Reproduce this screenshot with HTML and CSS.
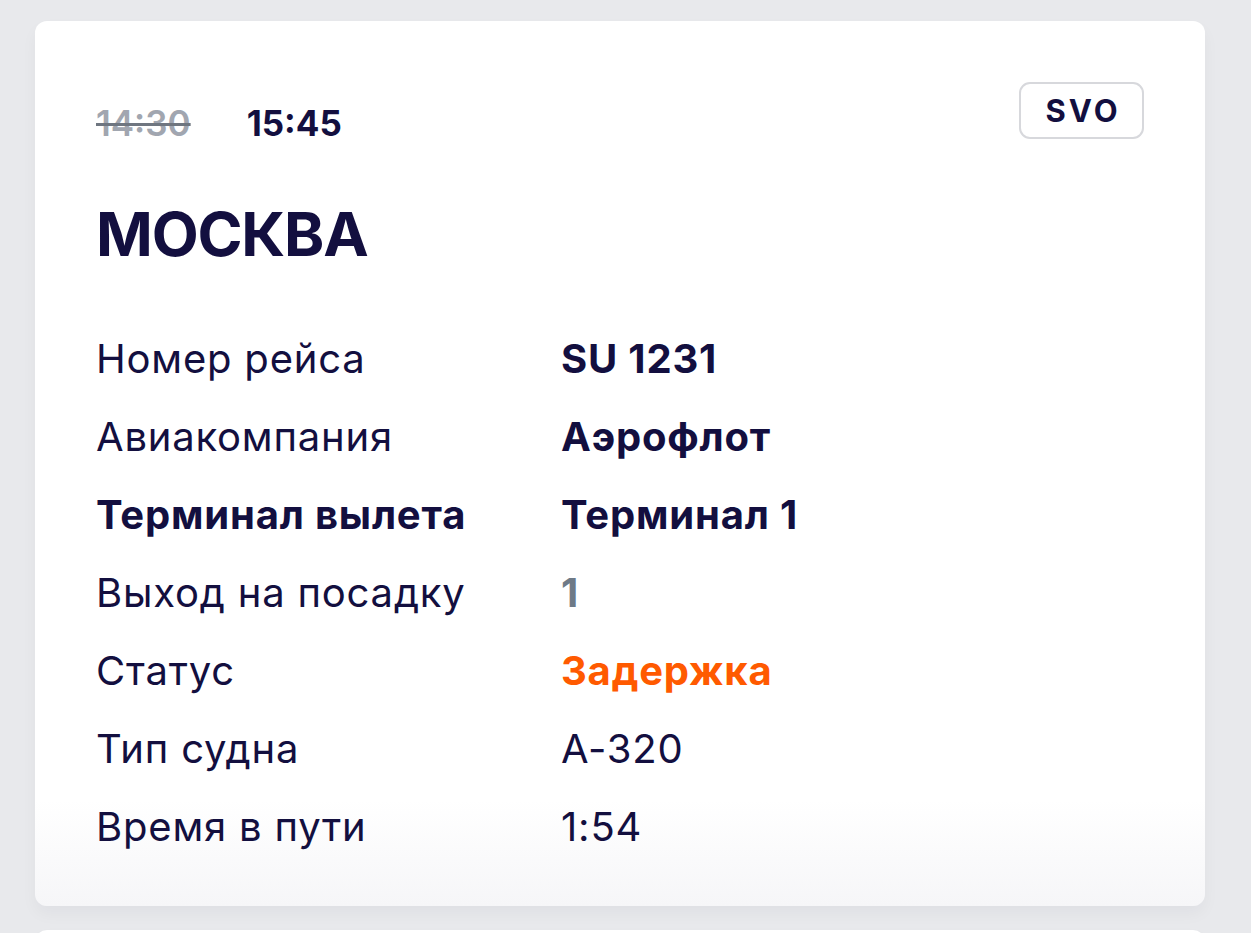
FILE: index.html
```html
<!DOCTYPE html>
<html lang="ru">
<head>
<meta charset="utf-8">
<link rel="stylesheet" href="styles.css">
</head>
<body>
<div class="page">
  <section class="card">
    <div class="head">
      <div class="times">
        <span class="time-old">14:30</span>
        <span class="time-new">15:45</span>
      </div>
      <div class="badge">SVO</div>
    </div>
    <h1 class="city">МОСКВА</h1>
    <dl class="info">
      <dt>Номер рейса</dt><dd class="bold">SU 1231</dd>
      <dt>Авиакомпания</dt><dd class="bold">Аэрофлот</dd>
      <dt class="bold">Терминал вылета</dt><dd class="bold">Терминал 1</dd>
      <dt>Выход на посадку</dt><dd class="bold gray">1</dd>
      <dt>Статус</dt><dd class="bold orange">Задержка</dd>
      <dt>Тип судна</dt><dd>A-320</dd>
      <dt>Время в пути</dt><dd>1:54</dd>
    </dl>
  </section>
  <section class="card next"></section>
</div>
</body>
</html>
```

FILE: styles.css
```css
* { box-sizing: border-box; }
html, body { margin: 0; padding: 0; }
body {
  background: #e8e9ec;
  font-family: Inter, "Noto Sans", sans-serif;
  color: #130f3f;
}
.page {
  height: 933px;
  overflow: hidden;
  padding: 21px 46px 0 35px;
  display: flex;
  flex-direction: column;
  gap: 24px;
}
.card {
  flex: none;
  background: linear-gradient(to bottom, #ffffff 0%, #ffffff 88%, #f6f6f8 100%);
  border-radius: 12px;
  padding: 61px 61px 40px 61px;
  box-shadow: 0 8px 16px rgba(20, 20, 40, 0.04);
}
.card.next {
  height: 60px;
  padding: 0;
  background: #ffffff;
}
.head {
  display: flex;
  justify-content: space-between;
  align-items: flex-end;
}
.times {
  display: flex;
  gap: 56px;
  font-size: 35px;
  line-height: 40px;
  font-weight: 700;
  margin-bottom: -4px;
}
.time-old {
  color: #a1a6b0;
  font-weight: 600;
  text-decoration: line-through;
  text-decoration-color: #6f7680;
  text-decoration-thickness: 3px;
}
.time-new { color: #130f3f; }
.badge {
  width: 125px;
  height: 57px;
  border: 2px solid #d7d8dc;
  border-radius: 11px;
  display: flex;
  align-items: center;
  justify-content: center;
  font-size: 31px;
  font-weight: 700;
  letter-spacing: 3px;
  padding-left: 3px;
  padding-bottom: 1px;
}
.city {
  margin: 58px 0 0 0;
  font-size: 61px;
  line-height: 75px;
  font-weight: 700;
  letter-spacing: -1.2px;
}
.info {
  margin: 48px 0 0 0;
  display: grid;
  grid-template-columns: 465px 1fr;
  grid-auto-rows: 78px;
  align-items: center;
  font-size: 40px;
  line-height: 48px;
  letter-spacing: 0.8px;
}
.info dt, .info dd { margin: 0; font-weight: 400; }
.info .bold { font-weight: 700; }
.info .gray { color: #6e7a87; }
.info .orange { color: #ff5a00; }
```
